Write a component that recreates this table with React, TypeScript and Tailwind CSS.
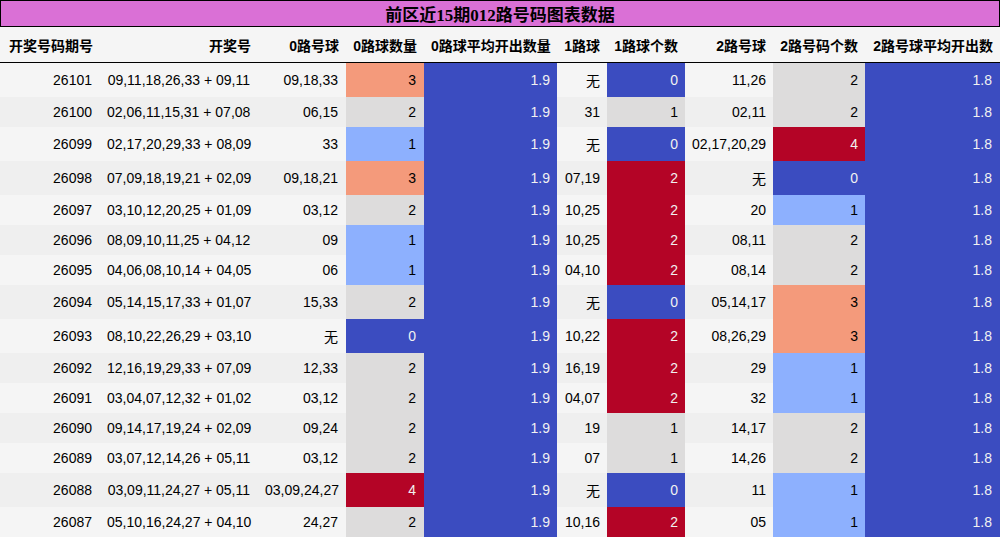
type Row = [string, string, string, number, string, number, string, number];

const rows: Row[] = [
  ["26101", "09,11,18,26,33 + 09,11", "09,18,33", 3, "无", 0, "11,26", 2],
  ["26100", "02,06,11,15,31 + 07,08", "06,15", 2, "31", 1, "02,11", 2],
  ["26099", "02,17,20,29,33 + 08,09", "33", 1, "无", 0, "02,17,20,29", 4],
  ["26098", "07,09,18,19,21 + 02,09", "09,18,21", 3, "07,19", 2, "无", 0],
  ["26097", "03,10,12,20,25 + 01,09", "03,12", 2, "10,25", 2, "20", 1],
  ["26096", "08,09,10,11,25 + 04,12", "09", 1, "10,25", 2, "08,11", 2],
  ["26095", "04,06,08,10,14 + 04,05", "06", 1, "04,10", 2, "08,14", 2],
  ["26094", "05,14,15,17,33 + 01,07", "15,33", 2, "无", 0, "05,14,17", 3],
  ["26093", "08,10,22,26,29 + 03,10", "无", 0, "10,22", 2, "08,26,29", 3],
  ["26092", "12,16,19,29,33 + 07,09", "12,33", 2, "16,19", 2, "29", 1],
  ["26091", "03,04,07,12,32 + 01,02", "03,12", 2, "04,07", 2, "32", 1],
  ["26090", "09,14,17,19,24 + 02,09", "09,24", 2, "19", 1, "14,17", 2],
  ["26089", "03,07,12,14,26 + 05,11", "03,12", 2, "07", 1, "14,26", 2],
  ["26088", "03,09,11,24,27 + 05,11", "03,09,24,27", 4, "无", 0, "11", 1],
  ["26087", "05,10,16,24,27 + 04,10", "24,27", 2, "10,16", 2, "05", 1],
];

// coolwarm, each column scaled on its own range
const heat4: Record<number, string> = {
  0: "bg-[#3b4cc0] text-[#f1f1f1]",
  1: "bg-[#8db0fe] text-black",
  2: "bg-[#dddcdc] text-black",
  3: "bg-[#f49a7b] text-black",
  4: "bg-[#b40426] text-[#f1f1f1]",
};

const heat2: Record<number, string> = {
  0: "bg-[#3b4cc0] text-[#f1f1f1]",
  1: "bg-[#dddcdc] text-black",
  2: "bg-[#b40426] text-[#f1f1f1]",
};

const headers = [
  "开奖号码期号",
  "开奖号",
  "0路号球",
  "0路球数量",
  "0路球平均开出数量",
  "1路球",
  "1路球个数",
  "2路号球",
  "2路号码个数",
  "2路号球平均开出数",
];

const widths = ["w-[100px]", "w-[158px]", "w-[88px]", "w-[78px]", "w-[133px]", "w-[50px]", "w-[78px]", "w-[88px]", "w-[92px]", "w-[135px]"];

const avg = "bg-[#3b4cc0] text-[#f1f1f1]";
const cell = "px-[7px] py-[7px] text-right whitespace-nowrap";

export default function App() {
  return (
    <div className="w-[1000px] bg-white text-black leading-[normal] font-['Liberation_Sans','Noto_Sans_CJK_SC',sans-serif]">
      <div className="border border-black bg-[#da70d6] text-center text-[17px] font-bold font-['Liberation_Serif','Noto_Sans_CJK_SC',serif]">
        前区近15期012路号码图表数据
      </div>
      <table className="w-full table-fixed border-collapse text-[14px]">
        <colgroup>
          {widths.map((w, i) => (
            <col key={i} className={w} />
          ))}
        </colgroup>
        <thead>
          <tr className="bg-[#f5f5f5] border-b border-black">
            {headers.map(h => (
              <th key={h} className={`${cell} pt-[8px] font-bold`}>
                {h}
              </th>
            ))}
          </tr>
        </thead>
        <tbody>
          {rows.map((r, i) => (
            <tr key={r[0]} className={i % 2 === 0 ? "bg-[#f5f5f5]" : "bg-[#efefef]"}>
              <td className={`${cell} pr-[8px]`}>{r[0]}</td>
              <td className={`${cell} pr-[8px]`}>{r[1]}</td>
              <td className={`${cell} pr-[8px]`}>{r[2]}</td>
              <td className={`${cell} pr-[8px] ${heat4[r[3]]}`}>{r[3]}</td>
              <td className={`${cell} ${avg}`}>1.9</td>
              <td className={cell}>{r[4]}</td>
              <td className={`${cell} ${heat2[r[5]]}`}>{r[5]}</td>
              <td className={cell}>{r[6]}</td>
              <td className={`${cell} ${heat4[r[7]]}`}>{r[7]}</td>
              <td className={`${cell} pr-[8px] ${avg}`}>1.8</td>
            </tr>
          ))}
        </tbody>
      </table>
    </div>
  );
}
